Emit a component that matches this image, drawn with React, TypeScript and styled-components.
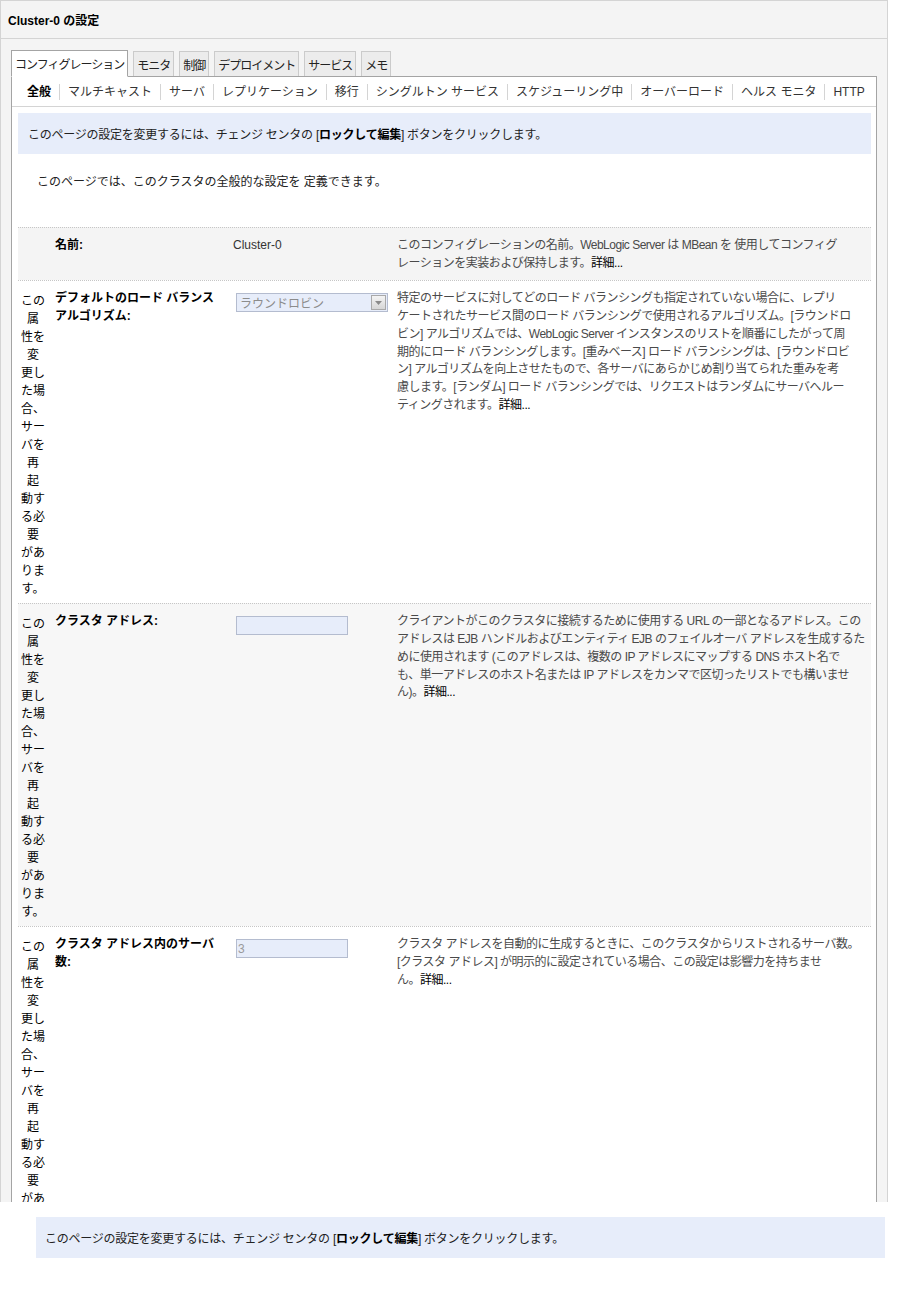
import React from "react";
import styled, { createGlobalStyle } from "styled-components";

const GlobalStyle = createGlobalStyle`
  body {
    margin: 0;
    background: #fff;
    font-family: "Liberation Sans", "Noto Sans CJK JP", sans-serif;
    font-size: 12px;
    color: #222;
  }
`;

const tabs = ["コンフィグレーション", "モニタ", "制御", "デプロイメント", "サービス", "メモ"];

const subTabs = [
  "全般",
  "マルチキャスト",
  "サーバ",
  "レプリケーション",
  "移行",
  "シングルトン サービス",
  "スケジューリング中",
  "オーバーロード",
  "ヘルス モニタ",
  "HTTP",
];

const restartNote = [
  "この",
  "属",
  "性を",
  "変",
  "更し",
  "た場",
  "合、",
  "サー",
  "バを",
  "再",
  "起",
  "動す",
  "る必",
  "要",
  "があ",
  "りま",
  "す。",
];

type Field = {
  label: string[];
  kind: "text" | "select" | "input";
  value: string;
  desc: string[];
  shade: string;
  restart: boolean;
};

const fields: Field[] = [
  {
    label: ["名前:"],
    kind: "text",
    value: "Cluster-0",
    desc: [
      "このコンフィグレーションの名前。WebLogic Server は MBean を 使用してコンフィグ",
      "レーションを実装および保持します。",
    ],
    shade: "#f4f4f4",
    restart: false,
  },
  {
    label: ["デフォルトのロード バランス", "アルゴリズム:"],
    kind: "select",
    value: "ラウンドロビン",
    desc: [
      "特定のサービスに対してどのロード バランシングも指定されていない場合に、レプリ",
      "ケートされたサービス間のロード バランシングで使用されるアルゴリズム。[ラウンドロ",
      "ビン] アルゴリズムでは、WebLogic Server インスタンスのリストを順番にしたがって周",
      "期的にロード バランシングします。[重みベース] ロード バランシングは、[ラウンドロビ",
      "ン] アルゴリズムを向上させたもので、各サーバにあらかじめ割り当てられた重みを考",
      "慮します。[ランダム] ロード バランシングでは、リクエストはランダムにサーバへルー",
      "ティングされます。",
    ],
    shade: "#fff",
    restart: true,
  },
  {
    label: ["クラスタ アドレス:"],
    kind: "input",
    value: "",
    desc: [
      "クライアントがこのクラスタに接続するために使用する URL の一部となるアドレス。この",
      "アドレスは EJB ハンドルおよびエンティティ EJB のフェイルオーバ アドレスを生成するた",
      "めに使用されます (このアドレスは、複数の IP アドレスにマップする DNS ホスト名で",
      "も、単一アドレスのホスト名または IP アドレスをカンマで区切ったリストでも構いませ",
      "ん)。",
    ],
    shade: "#f7f7f7",
    restart: true,
  },
  {
    label: ["クラスタ アドレス内のサーバ", "数:"],
    kind: "input",
    value: "3",
    desc: [
      "クラスタ アドレスを自動的に生成するときに、このクラスタからリストされるサーバ数。",
      "[クラスタ アドレス] が明示的に設定されている場合、この設定は影響力を持ちませ",
      "ん。",
    ],
    shade: "#fff",
    restart: true,
  },
];

const Frame = styled.div`
  width: 888px;
  height: 1202px;
  box-sizing: border-box;
  border: 1px solid #d4d4d4;
  border-bottom: none;
  background: #f4f4f4;
  overflow: hidden;
`;

const Header = styled.div`
  height: 37px;
  display: flex;
  align-items: center;
  padding: 0 7px;
  border-bottom: 1px solid #d4d4d4;
  font-weight: bold;
  color: #000;
`;

const TabArea = styled.div`
  padding: 11px 10px 0;
`;

const TabBar = styled.div`
  display: flex;
  align-items: flex-end;
  gap: 5px;
  position: relative;
  z-index: 1;
`;

const Tab = styled.div<{ $active?: boolean }>`
  height: ${(p) => (p.$active ? 25 : 24)}px;
  padding: 0 3px;
  display: flex;
  align-items: center;
  border: 1px solid ${(p) => (p.$active ? "#a4a4a4" : "#cbcbcb")};
  border-bottom: ${(p) => (p.$active ? "1px solid #fff" : "none")};
  margin-bottom: ${(p) => (p.$active ? -1 : 0)}px;
  background: ${(p) => (p.$active ? "#fff" : "#ececec")};
  color: #222;
  letter-spacing: -1px;
  white-space: nowrap;
`;

const ContentBox = styled.div`
  background: #fff;
  border: 1px solid #a4a4a4;
  min-height: 1200px;
`;

const SubNav = styled.div`
  height: 29px;
  display: flex;
  align-items: center;
  padding-left: 7px;
  border-bottom: 1px solid #d4d4d4;
`;

const SubNavItem = styled.span<{ $active?: boolean; $first?: boolean }>`
  padding: 0 8px;
  line-height: 16px;
  border-left: ${(p) => (p.$first ? "none" : "1px solid #d4d4d4")};
  font-weight: ${(p) => (p.$active ? "bold" : "normal")};
  color: ${(p) => (p.$active ? "#000" : "#333")};
  white-space: nowrap;
`;

const InfoBox = styled.div`
  height: 41px;
  margin: 6px 5px 0 6px;
  padding-left: 10px;
  display: flex;
  align-items: center;
  background: #e7edfa;
  color: #222;
  letter-spacing: -0.25px;

  b {
    color: #000;
  }
`;

const Intro = styled.p`
  margin: 19px 0 0 25px;
  line-height: 18px;
  color: #222;
`;

const Table = styled.div`
  margin: 36px 5px 0 6px;
`;

const Row = styled.div<{ $shade: string }>`
  display: grid;
  grid-template-columns: 30px 185px 164px 1fr;
  padding: 9px 0 5px;
  border-top: 1px dotted #c6c6c6;
  background: ${(p) => p.$shade};
`;

const Note = styled.div`
  margin-top: 2px;
  text-align: center;
  line-height: 18px;
  color: #000;
`;

const Label = styled.div`
  padding-left: 7px;
  line-height: 17.7px;
  font-weight: bold;
  color: #000;
`;

const Value = styled.div`
  line-height: 17.7px;
  color: #333;
`;

const Desc = styled.div`
  padding-bottom: 3px;
  line-height: 17.7px;
  color: #4a4a4a;
  letter-spacing: -0.5px;
  white-space: nowrap;
`;

const More = styled.span`
  color: #000;
`;

const FakeSelect = styled.div`
  width: 152px;
  height: 19px;
  margin: 3px 0 0 3px;
  box-sizing: border-box;
  border: 1px solid #b4bccf;
  background: #e7edfa;
  display: flex;
  align-items: center;
  justify-content: space-between;
  padding-left: 3px;
  color: #8c8c8c;
`;

const ArrowBox = styled.span`
  width: 15px;
  height: 15px;
  margin-right: 1px;
  box-sizing: border-box;
  border: 1px solid #a9a9a9;
  background: linear-gradient(#f4f4f4, #d6d6d6);
  display: flex;
  align-items: center;
  justify-content: center;
`;

const TextField = styled.input`
  width: 112px;
  height: 19px;
  margin: 3px 0 0 3px;
  box-sizing: border-box;
  border: 1px solid #b4bccf;
  background: #e7edfa;
  padding: 0 1px;
  font: 12px "Liberation Sans", "Noto Sans CJK JP", sans-serif;
  color: #9a9a9a;
  outline: none;
`;

const BottomInfo = styled.div`
  width: 849px;
  height: 41px;
  margin: 15px 0 0 36px;
  padding-left: 9px;
  box-sizing: border-box;
  display: flex;
  align-items: center;
  background: #e7edfa;
  color: #222;
  letter-spacing: -0.25px;

  b {
    color: #000;
  }
`;

const lockMessage = (
  <>
    このページの設定を変更するには、チェンジ センタの [<b>ロックして編集</b>] ボタンをクリックします。
  </>
);

const FieldValue = ({ field }: { field: Field }) => {
  if (field.kind === "select") {
    return (
      <div>
        <FakeSelect>
          {field.value}
          <ArrowBox>
            <svg width="7" height="4" viewBox="0 0 7 4">
              <path d="M0 0h7L3.5 4z" fill="#8a8a8a" />
            </svg>
          </ArrowBox>
        </FakeSelect>
      </div>
    );
  }
  if (field.kind === "input") {
    return (
      <div>
        <TextField value={field.value} readOnly />
      </div>
    );
  }
  return <Value>{field.value}</Value>;
};

const App = () => {
  return (
    <>
      <GlobalStyle />
      <Frame>
        <Header>Cluster-0 の設定</Header>
        <TabArea>
          <TabBar>
            {tabs.map((t, i) => (
              <Tab key={t} $active={i === 0}>
                {t}
              </Tab>
            ))}
          </TabBar>
          <ContentBox>
            <SubNav>
              {subTabs.map((t, i) => (
                <SubNavItem key={t} $active={i === 0} $first={i === 0}>
                  {t}
                </SubNavItem>
              ))}
            </SubNav>
            <InfoBox>{lockMessage}</InfoBox>
            <Intro>このページでは、このクラスタの全般的な設定を 定義できます。</Intro>
            <Table>
              {fields.map((f) => (
                <Row key={f.label.join("")} $shade={f.shade}>
                  <Note>
                    {f.restart &&
                      restartNote.map((line, i) => (
                        <React.Fragment key={i}>
                          {line}
                          <br />
                        </React.Fragment>
                      ))}
                  </Note>
                  <Label>
                    {f.label.map((line, i) => (
                      <React.Fragment key={i}>
                        {line}
                        {i < f.label.length - 1 && <br />}
                      </React.Fragment>
                    ))}
                  </Label>
                  <FieldValue field={f} />
                  <Desc>
                    {f.desc.map((line, i) => (
                      <React.Fragment key={i}>
                        {line}
                        {i < f.desc.length - 1 ? <br /> : <More>詳細...</More>}
                      </React.Fragment>
                    ))}
                  </Desc>
                </Row>
              ))}
            </Table>
          </ContentBox>
        </TabArea>
      </Frame>
      <BottomInfo>{lockMessage}</BottomInfo>
    </>
  );
};

export default App;
